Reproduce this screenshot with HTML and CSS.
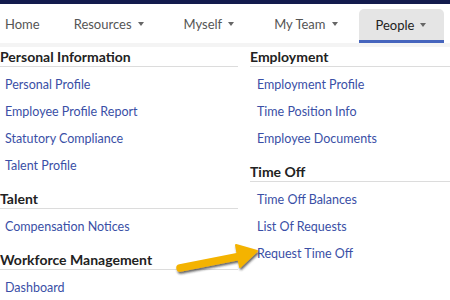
FILE: index.html
```html
<html lang="en">
<head>
    <meta charset="UTF-8">
    <title>People Menu</title>
    <link rel="stylesheet" href="styles.css">
</head>
<body>
    <div class="topbar"></div>
    <nav class="nav">
        <a class="nav-item first">Home</a>
        <a class="nav-item">Resources <span class="caret"></span></a>
        <a class="nav-item">Myself <span class="caret"></span></a>
        <a class="nav-item">My Team <span class="caret"></span></a>
        <a class="nav-item active">People <span class="caret"></span></a>
    </nav>

    <div class="menu">
        <div class="column left">
            <div class="section">
                <h3>Personal Information</h3>
                <ul>
                    <li><a>Personal Profile</a></li>
                    <li><a>Employee Profile Report</a></li>
                    <li><a>Statutory Compliance</a></li>
                    <li><a>Talent Profile</a></li>
                </ul>
            </div>
            <div class="section">
                <h3>Talent</h3>
                <ul>
                    <li><a>Compensation Notices</a></li>
                </ul>
            </div>
            <div class="section">
                <h3>Workforce Management</h3>
                <ul>
                    <li><a>Dashboard</a></li>
                </ul>
            </div>
        </div>
        <div class="column right">
            <div class="section">
                <h3>Employment</h3>
                <ul>
                    <li><a>Employment Profile</a></li>
                    <li><a>Time Position Info</a></li>
                    <li><a>Employee Documents</a></li>
                </ul>
            </div>
            <div class="section">
                <h3>Time Off</h3>
                <ul>
                    <li><a>Time Off Balances</a></li>
                    <li><a>List Of Requests</a></li>
                    <li><a>Request Time Off</a></li>
                </ul>
            </div>
        </div>
    </div>

    <!-- callout arrow pointing at Request Time Off -->
    <svg class="pointer" width="110" height="50" viewBox="160 235 110 50">
        <defs>
            <filter id="shadow" x="-20%" y="-40%" width="140%" height="180%">
                <feDropShadow dx="1" dy="2" stdDeviation="1.2" flood-color="#222" flood-opacity="0.7"/>
            </filter>
        </defs>
        <g filter="url(#shadow)" fill="#f4b300" stroke="#f4b300">
            <line x1="180" y1="268" x2="241" y2="256" stroke-width="7.5" stroke-linecap="round"/>
            <polygon points="236,245 257,251 240,267" stroke-width="2" stroke-linejoin="round"/>
        </g>
    </svg>
</body>
</html>
```

FILE: styles.css
```css
body {
    margin: 0;
    font-family: Lato, "Noto Sans", sans-serif;
    background: white;
    color: #222;
    position: relative;
    overflow: hidden;
}
.topbar {
    height: 4px;
    background-color: #131b4d;
}
.nav {
    display: flex;
    align-items: flex-end;
    height: 39px;
    border-bottom: 4px solid #f4f4f4;
}
.nav-item {
    display: flex;
    align-items: center;
    height: 100%;
    padding: 0 20px;
    font-size: 13px;
    color: #555;
    white-space: nowrap;
}
.nav-item.first {
    padding-left: 5px;
    padding-right: 14px;
}
.nav-item.active {
    height: 31px;
    margin-left: 1px;
    padding: 0 18px 0 17px;
    background-color: #e5e5e5;
    border-radius: 5px 5px 0 0;
    border-bottom: 3px solid #4665bd;
    color: #222;
}
.caret {
    display: inline-block;
    margin-left: 6px;
    border-left: 3.5px solid transparent;
    border-right: 3.5px solid transparent;
    border-top: 4px solid #666;
}
.menu {
    display: grid;
    grid-template-columns: 238px 200px;
    column-gap: 12px;
}
.section {
    margin-bottom: 10px;
}
.section h3 {
    margin: 0;
    height: 19px;
    line-height: 20px;
    font-size: 14px;
    font-weight: bold;
    color: #222;
    border-bottom: 1px solid #dcdcdc;
}
.section ul {
    list-style: none;
    margin: 0;
    padding: 4px 0 0 5px;
}
.section li {
    height: 27px;
    line-height: 27px;
    font-size: 12.5px;
}
.section a {
    color: #3a4fa6;
}
.right .section ul {
    padding-left: 7px;
}
.pointer {
    position: absolute;
    left: 160px;
    top: 235px;
}
```
